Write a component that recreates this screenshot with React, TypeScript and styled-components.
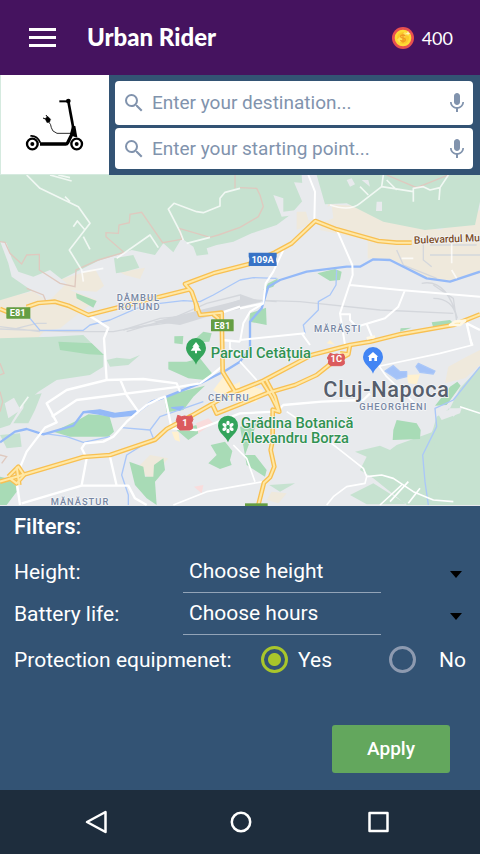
import React from 'react';
import styled, { createGlobalStyle } from 'styled-components';
import { MdMic, MdSearch } from 'react-icons/md';

const GlobalStyle = createGlobalStyle`
  *, *::before, *::after { box-sizing: border-box; }
  body { margin: 0; background: #335374; font-family: Roboto, sans-serif; }
  button, input, select { font: inherit; }
`;

const Page = styled.div`
  display: flex;
  flex-direction: column;
  min-height: 100vh;
  background: #335374;
  color: #fff;
`;

const Header = styled.header`
  display: flex;
  align-items: center;
  height: 75px;
  padding: 0 27px 0 28px;
  background: #45135f;
  font-family: Lato, sans-serif;
`;

const IconButton = styled.button`
  display: flex;
  padding: 0;
  border: 0;
  background: none;
  color: #fff;
  cursor: pointer;
`;

const Title = styled.h1`
  flex: 1;
  margin: 0 0 2px 30px;
  font-size: 24px;
  line-height: 32px;
  font-weight: 900;
`;

const Coins = styled.div`
  display: flex;
  align-items: center;
  gap: 8px;
  font-size: 18px;
`;

const SearchPanel = styled.section`
  display: flex;
  background: #335374;
`;

const Vehicle = styled.div`
  display: grid;
  place-items: center;
  width: 109px;
  height: 100px;
  background: #fff;
  border: solid #d5eadf;
  border-width: 0 0 1px 1px;
`;

const Fields = styled.div`
  flex: 1;
  display: flex;
  flex-direction: column;
  gap: 3px;
  padding: 6px 7px 6px 6px;
`;

const Field = styled.label`
  flex: 1;
  display: flex;
  align-items: center;
  gap: 6px;
  padding: 0 4px 0 7px;
  border-radius: 4px;
  background: #fff;
  color: #8193ad;
  &:first-child { flex: none; height: 44px; }
`;

const SearchInput = styled.input`
  flex: 1;
  min-width: 0;
  padding: 0;
  border: 0;
  outline: 0;
  background: none;
  color: #50617a;
  font-size: 19px;
  line-height: 24px;
  &::placeholder { color: #8193ad; opacity: 1; }
`;

const MapArt = styled.svg`
  display: block;
  width: 100%;
  height: auto;
  background: #e8eaed;
`;

const Filters = styled.form`
  flex: 1;
  display: flex;
  flex-direction: column;
  padding: 8px 14px 17px;
  font-size: 21px;
  line-height: 26px;
`;

const FiltersTitle = styled.h2`
  margin: 0 0 11px;
  font-size: 22px;
  line-height: 26px;
  font-weight: 500;
`;

const FilterRow = styled.div`
  display: flex;
  align-items: center;
  height: 42px;
`;

const FilterLabel = styled.label`
  width: 169px;
`;

const SelectBox = styled.div`
  position: relative;
  flex: 1;
  display: flex;
`;

const Select = styled.select`
  flex: 1;
  height: 42px;
  padding: 0 40px 2px 6px;
  border: 0;
  border-radius: 0;
  outline: 0;
  appearance: none;
  color: #fff;
  background: linear-gradient(#93a4b8, #93a4b8) left bottom / 70% 1px no-repeat;
`;

const Caret = styled.svg`
  position: absolute;
  right: 4px;
  top: 20px;
  pointer-events: none;
`;

const RadioRow = styled.fieldset`
  display: flex;
  align-items: center;
  margin: 0;
  padding: 11px 0 10px;
  border: 0;
`;

const RadioTitle = styled.span`
  flex: 1;
`;

const Choices = styled.div`
  display: flex;
  gap: 57px;
`;

const Choice = styled.label<{ $gap: number }>`
  display: flex;
  align-items: center;
  gap: ${(p) => p.$gap}px;
`;

const Radio = styled.input`
  appearance: none;
  width: 27px;
  height: 27px;
  margin: 0;
  border: 3px solid #8d9ab0;
  border-radius: 50%;
  &:checked {
    border-color: #a9c62b;
    background: radial-gradient(circle, #a9c62b 0 6px, transparent 7px);
  }
`;

const Apply = styled.button`
  align-self: flex-end;
  width: 118px;
  height: 48px;
  margin: auto 16px 0 0;
  border: 0;
  border-radius: 3px;
  background: #63a75d;
  color: #fff;
  font-size: 19px;
  font-weight: 500;
`;

const NavBar = styled.nav`
  display: flex;
  align-items: center;
  justify-content: space-between;
  height: 64px;
  padding: 0 90px 0 84px;
  background: #1e2d3d;
`;

const Scooter = () => (
  <svg width="70" height="70" viewBox="0 0 210 210" fill="none" stroke="#000" role="img" aria-label="Electric scooter">
    <circle cx="37" cy="162" r="16" strokeWidth="7" />
    <circle cx="37" cy="162" r="6" fill="#000" stroke="none" />
    <circle cx="170" cy="162" r="16" strokeWidth="7" />
    <circle cx="170" cy="162" r="6" fill="#000" stroke="none" />
    <path d="M31 138q20-2 30 20" strokeWidth="5" />
    <path d="M60 162h77q4 0 6-4l18-36" strokeWidth="10" />
    <path d="M118 34h28" strokeWidth="6" />
    <path d="M145 34l16 86" strokeWidth="8" />
    <circle cx="145" cy="33" r="7" fill="#000" stroke="none" />
    <path d="M156 108h10l6 34-10-2-12-8z" fill="#000" stroke="none" />
    <path d="M86 96q7 6 8 17t17 17h44" strokeWidth="2.5" />
    <path d="M75 86l8-7 9 9-3 8-8 2z" fill="#000" strokeWidth="1" />
    <path d="M76 87l-7-3M82 81l-4-6" strokeWidth="3" />
  </svg>
);

const Coin = () => (
  <svg width="22" height="22" viewBox="0 0 66 66" aria-hidden="true">
    <circle cx="33" cy="33" r="33" fill="#e8504f" />
    <circle cx="33" cy="33" r="25" fill="#fddb35" />
    <circle cx="33" cy="33" r="18" fill="#fcc92d" />
    <path d="M15 38L39 14l8 6-24 28z" fill="#ffe45c" />
    <path d="M40 27q-3-3-7-3-7 0-7 5 0 3 7 4t7 5q0 5-7 5-5 0-8-3M33 20v27" fill="none" stroke="#f09a22" strokeWidth="4" />
    <path d="M48 11l2 6 6 2-6 2-2 6-2-6-6-2 6-2z" fill="#fff4bd" />
  </svg>
);

const highways = [
  'M0 402L25 412M80 396L115 384L165 380L205 392L265 420L350 398L480 365L570 343',
  'M1235 203L1190 203L1135 198L1010 163L946 138L875 205L825 232L745 268L640 295L555 327L575 350L600 420L665 413L668 590L705 650',
  'M588 385L590 408M640 418L655 430L655 460',
  'M1440 418L1410 430L1360 450L1200 478L1110 500L1050 510L935 540L790 617L720 645L690 655L640 685L575 722L500 762L465 794L330 840L250 846L60 902L0 920',
  'M1050 510L1045 538L1020 535M1045 538L990 568L950 600L885 630L805 653L720 688L650 716L638 690',
  'M785 617L815 665L835 706M797 612L825 665L838 710L818 704L818 795L812 825L823 875L810 907L792 923L775 990',
  'M25 905L55 875L72 900L50 925L30 910M50 875L58 930',
];

const pin = 'M0 46C-5 28-30 18-30-4a30 30 0 0 1 60 0C30 18 5 28 0 46z';

const CityMap = () => (
  <MapArt viewBox="0 0 1440 993" preserveAspectRatio="xMidYMid slice" role="img" aria-label="Map of Cluj-Napoca">
    <g fill="#efe9dc">
      <path d="M0 370L90 352L175 315L285 282L312 332L290 350L210 345L290 375L240 412L180 460L130 470L100 505L35 508L0 500z" />
      <path d="M360 292L435 278L420 312L375 300z" />
      <path d="M985 88L1060 92L1150 135L1320 165L1440 105V295L1350 322L1275 308L1180 255L1103 250V195L960 165z" />
      <path d="M890 110L920 110L950 138L890 165z" />
      <path d="M0 495H150L115 508L0 503zM415 875L450 840L505 850L475 885L465 920L435 900z" />
      <path d="M1345 575L1400 545L1440 525V570L1395 610L1335 625zM815 950L860 955L835 985L800 975z" />
    </g>
    <g fill="#c6e2d0">
      <path d="M0 0H905L910 75L870 120L830 150L755 175L700 200L650 210L620 220L625 238L590 242L580 215L545 190L520 232L490 205L465 240L395 225L370 235L300 255L180 315L85 350L0 376z" />
      <path d="M342 250L400 240L418 278L375 290L348 295zM950 0H1440V80L1425 150L1275 165L1150 140L1070 100L1040 85L975 88z" />
      <path d="M0 490L155 485L250 480L310 540L310 575L270 600L170 615L115 650L60 700L30 750L0 760z" />
      <path d="M75 665L125 655L105 705L85 745L40 745L70 700zM0 780L60 775L65 815L20 820zM320 555L350 548L390 552L420 540L385 570L330 575z" />
      <path d="M1440 575L1380 640L1350 700L1310 725L1300 760L1268 840L1290 990H1440zM1345 700L1385 700L1360 725z" />
      <path d="M1065 830L1140 812L1170 825L1190 810L1300 770L1320 990H1220L1120 910L1080 885L1100 845zM1120 925L1050 960L1100 988H1220zM808 930L885 925L840 950z" />
    </g>
    <g fill="#a8dbb6">
      <path d="M228 355L290 378L280 398L230 370zM523 484L550 483L548 508L523 505zM588 490L610 470L635 475L628 500L595 502z" />
      <path d="M175 500L275 505L312 540L265 538L180 525zM505 560L560 560L600 550L640 600L615 615L565 610L505 583z" />
      <path d="M160 770L235 735L265 718L328 722L342 770L325 785L210 785zM493 670L530 653L615 632L580 665L550 705L500 712z" />
      <path d="M388 860L430 875L435 905L460 905L462 870L490 850L495 885L465 920L470 990L440 970L405 930zM0 905L45 915L50 950L20 990H0z" />
      <path d="M530 765L590 750L595 775L565 795zM632 810L675 800L697 828L690 855L695 870L660 882L625 865L650 840zM720 755L770 745L735 840L765 840L800 885L795 905L740 870z" />
      <path d="M952 295L1005 282L1025 290L1020 315L990 318zM805 325L835 310L820 335L790 345zM750 415L798 398L800 450L748 440zM1202 460L1235 458L1200 470zM1295 442L1350 435L1360 445L1300 458z" />
      <path d="M1180 765L1190 735L1250 745L1262 765L1260 792L1178 795zM1350 635L1372 620L1382 632L1340 690L1305 692z" />
    </g>
    <g fill="#fff1cf">
      <path d="M668 608L700 630L720 620V685L665 665L640 645zM720 645L760 635L790 645L770 680L720 690zM1220 600L1260 598L1250 628L1225 625zM515 770L535 770L540 800L525 795zM980 505L990 495L1005 510z" />
      <path d="M588 745L625 730L640 745L595 775zM582 935L610 930L605 955z" fill="#f9dcdc" />
    </g>
    <g fill="#e8eaed">
      <path d="M0 198L20 205L35 250L55 290L100 305L150 285L200 325L145 380L85 340L35 305L25 265z" />
      <path d="M162 22L200 25L230 80L240 105L275 90L280 130L240 145L205 135L195 100zM815 60L850 100L890 110L830 145zM100 60L130 70L130 110L170 105L165 120L125 125z" transform="translate(720 0)" />
      <path d="M1130 80H1146V108H1128zM1040 15L1055 10L1065 28L1050 35zM1085 15L1105 15L1110 35zM14 685L42 668L62 705L25 730zM1310 710L1385 700L1380 715L1325 735z" />
    </g>
    <g fill="none" stroke="#d4d7dc" strokeWidth="4">
      <path d="M0 462L200 470L340 470L600 420L720 400M0 455L120 470M50 460L110 445L140 445M380 470L530 425L620 385L720 360M750 375L900 380L1140 405L1360 415M720 372L830 380" />
      <path d="M370 465L480 430L600 420L720 375M390 460L530 440L620 415M1190 225L1210 270L1310 310M1270 190V255L1295 275M1290 210H1430M1290 240H1440M1300 330L1360 370L1370 440M1300 370Q1360 370 1370 430M1265 325Q1340 310 1372 430" />
      <path d="M460 440L720 375V395L540 450zM720 357L785 380L720 395z" fill="#d4d7dc" stroke="none" />
    </g>
    <g fill="none" stroke="#aac7f8" strokeWidth="4" strokeLinejoin="round">
      <path d="M40 398L90 430L120 466H250L270 450L330 435L410 400L480 385L550 377L600 380L640 360L720 315M720 315L760 308L830 310M1010 285L1008 330L990 360L955 380L955 405L910 450L915 475" />
      <path d="M130 775L200 785L250 802L330 785M365 758L450 765L480 725L610 680M450 765L460 790L380 840L365 900L385 960V990M1440 575L1360 675L1305 700L1310 755L1268 840L1275 920L1285 990" />
      <path d="M0 802L45 770L80 762L130 778L220 752L250 712L300 708L340 720L415 710L455 680L500 665L600 625L680 585L720 560L750 520V440L785 400L805 335L840 315L920 290L1040 275L1080 275L1120 253L1170 255L1280 310L1350 320L1440 290" stroke="#94b9f8" strokeWidth="7" />
      <path d="M250 710L300 705L345 715L410 707L405 720L340 726L300 718zM515 698L550 695L540 705z" fill="#94b9f8" stroke="#94b9f8" />
      <path d="M1155 588L1180 572L1200 590L1220 590V605L1190 612zM1248 575L1255 565L1305 588L1300 597L1260 592z" fill="#a3c2f8" />
    </g>
    <g fill="none" stroke="#dfc9bf" strokeWidth="4">
      <path d="M0 200L15 202L30 235L65 267L80 240L118 238L118 285L180 325L225 335L228 285L295 255L372 232L318 185V173L355 175L357 150L388 143L390 118L425 112L450 148L488 203L545 193L538 160L630 187L655 180L720 157L775 125L790 95L780 60L770 40L720 38M705 0V40M80 340L130 360L140 385M1160 0L1250 38L1345 0M0 565L12 595L0 600M0 650L8 680L0 710M0 840L20 845L5 865" />
    </g>
    <g fill="none" stroke="#fff" strokeWidth="5" strokeLinejoin="round">
      <g strokeOpacity="0.75">
        <path d="M80 0L120 40L235 95L270 145L208 225L245 285L250 320M220 155L232 138L255 165M250 185L270 223M195 65L210 80M245 292L310 280M350 250L450 180L475 218M720 40L675 52L660 70V93L610 113L590 110L522 85L505 102L540 170L550 195M560 205L630 187M150 0L215 18M175 0L210 8" />
        <path d="M990 90Q1050 110 1080 85L1145 35L1150 0M1145 35L1240 50V80M1240 50V40L1270 35L1290 45L1320 38L1345 0M1320 38L1317 75M1080 35L1105 60M1160 15L1190 45M1240 250H1205M1355 205V265M1355 285L1370 310M60 700L85 665" />
      </g>
      <path d="M925 0L945 50L943 138M1010 163L1057 270L1058 300L1020 415L1035 510M1050 330L1200 345L1440 365M1215 345L1195 395L1155 430L1070 455L1050 435V418H1022M1100 447L1120 495M915 475L720 495M905 475L930 510M850 225L820 290L797 325L790 385L750 410L730 445L720 500" strokeWidth="6" />
      <path d="M265 420L325 458L312 490L320 615M720 395L665 413M665 495L720 500M665 495V560M790 385L720 400M1400 445L1415 510M1400 445L1440 465" strokeWidth="7" />
      <path d="M60 990L50 920L55 890L80 830L135 758L170 742L140 685L200 645L320 615L430 612L530 625L540 650M155 725L230 675L540 635L600 625L635 600L665 575M360 612L380 660L415 710L380 740L340 785L310 800L255 805L245 820L260 850L245 930M65 985L245 932L385 932L405 970L440 990M330 845L350 932M415 710L440 690L480 670L495 665L515 760L590 765L720 715L830 710L850 690L965 680L1090 675L1110 655" strokeWidth="7" />
      <path d="M520 990L620 950L720 932L790 920M860 710L950 770L1090 880L1100 905L1095 925L1040 935L1000 965L980 990M1100 905L1145 900L1180 910L1240 950L1300 975L1360 980M700 810L740 850L765 920M1135 570L1160 605L1260 700M1140 573L1320 535L1418 510L1410 490M1380 695L1440 715M720 560L770 615M690 500V520L720 545M1225 920L1170 980M1205 930L1140 990M1260 940L1225 985" />
    </g>
    <g fill="none" strokeLinejoin="round">
      {highways.map((d) => <path key={d} d={d} stroke="#f8c052" strokeWidth="14" />)}
      {highways.map((d) => <path key={d} d={d} stroke="#ffe8a6" strokeWidth="6" />)}
      <path d="M1365 440L1395 437L1380 450L1350 450zM1100 490L1125 485" stroke="#fff8e4" strokeWidth="8" />
    </g>

    <g>
      <rect x="19" y="397" width="72" height="34" rx="2" fill="#659e43" />
      <rect x="633" y="433" width="68" height="36" rx="2" fill="#659e43" />
      <rect x="735" y="985" width="68" height="8" fill="#659e43" />
      <path d="M746 233H830V245q-4 9 0 18v10H746V263q4-9 0-18z" fill="#3873c6" />
      <path d="M533 721l12 4q10-4 16 0l14-3 4 11-4 10q4 10 2 18l-8 4H540l-8-7 1-12-4-9zM990 535l12 4q10-4 16 0l12-2 4 9-2 10q3 8 0 12l-8 4H992l-7-6 1-10-4-7z" fill="#db5b5e" stroke="#db5b5e" strokeWidth="3" />
    </g>
    <g fill="#fff" fontFamily="Roboto, sans-serif" fontSize="28" fontWeight="700" textAnchor="middle">
      <text x="53" y="424">E81</text>
      <text x="667" y="461">E81</text>
      <text x="788" y="263">109A</text>
      <text x="555" y="753">1</text>
      <text x="1009" y="562">1C</text>
    </g>

    <g transform="translate(588 523)">
      <path d={pin} fill="#34a45b" />
      <path d="M0-22l11 14H7l9 12H3v8h-6V4h-13l9-12h-4z" fill="#fff" />
    </g>
    <g transform="translate(684 756)">
      <path d={pin} fill="#34a45b" />
      <g fill="#fff">
        {[0, 60, 120, 180, 240, 300].map((a) => (
          <ellipse key={a} cx="0" cy="-12" rx="5" ry="7" transform={`rotate(${a} 0 0)`} />
        ))}
      </g>
    </g>
    <g transform="translate(1119 550)">
      <path d={pin} fill="#4285f4" />
      <path d="M0-19l16 14h-4V8H4V-1h-8v9h-8V-5h-4z" fill="#fff" />
    </g>

    <g fontFamily="Roboto, sans-serif" fontWeight="500" stroke="#f4f6f8" strokeWidth="5" paintOrder="stroke" strokeLinejoin="round">
      <g fill="#7786a3" fontSize="28" letterSpacing="3">
        <text x="350" y="378">DÂMBUL</text>
        <text x="354" y="405">ROTUND</text>
        <text x="942" y="472">MĂRĂȘTI</text>
        <text x="624" y="678">CENTRU</text>
        <text x="1078" y="706">GHEORGHENI</text>
        <text x="152" y="989">MĂNĂȘTUR</text>
      </g>
      <g fill="#319252" fontSize="44">
        <text x="632" y="548">Parcul Cetățuia</text>
        <text x="723" y="758">Grădina Botanică</text>
        <text x="723" y="804">Alexandru Borza</text>
      </g>
      <text x="1242" y="206" fill="#7d4d27" fontSize="31" transform="rotate(-2 1242 206)">Bulevardul Mu</text>
      <text x="970" y="665" fill="#565e6c" fontSize="65" letterSpacing="2">Cluj-Napoca</text>
    </g>
  </MapArt>
);

const PickerRow = ({ id, label, placeholder, options }: { id: string; label: string; placeholder: string; options: string[] }) => (
  <FilterRow>
    <FilterLabel htmlFor={id}>{label}</FilterLabel>
    <SelectBox>
      <Select id={id} defaultValue="">
        <option value="">{placeholder}</option>
        {options.map((o) => <option key={o}>{o}</option>)}
      </Select>
      <Caret width="12" height="7" viewBox="0 0 12 7" aria-hidden="true"><path d="M0 0h12L6 7z" /></Caret>
    </SelectBox>
  </FilterRow>
);

export default function App() {
  return (
    <Page>
      <GlobalStyle />
      <Header>
        <IconButton type="button" aria-label="Menu">
          <svg width="29" height="19" viewBox="0 0 29 19" aria-hidden="true">
            <path d="M1 1.5h27M1 9.5h27M1 17.5h27" stroke="#fff" strokeWidth="3" />
          </svg>
        </IconButton>
        <Title>Urban Rider</Title>
        <Coins><Coin />400</Coins>
      </Header>
      <SearchPanel>
        <Vehicle><Scooter /></Vehicle>
        <Fields>
          {['Enter your destination...', 'Enter your starting point...'].map((text) => (
            <Field key={text}>
              <MdSearch size={24} aria-hidden="true" />
              <SearchInput type="text" aria-label={text} placeholder={text} />
              <MdMic size={24} aria-hidden="true" />
            </Field>
          ))}
        </Fields>
      </SearchPanel>
      <CityMap />
      <Filters onSubmit={(e) => e.preventDefault()}>
        <FiltersTitle>Filters:</FiltersTitle>
        <PickerRow id="height" label="Height:" placeholder="Choose height" options={['Low', 'Medium', 'High']} />
        <PickerRow id="battery" label="Battery life:" placeholder="Choose hours" options={['1', '2', '3']} />
        <RadioRow aria-labelledby="protection-title">
          <RadioTitle id="protection-title">Protection equipmenet:</RadioTitle>
          <Choices>
            <Choice $gap={10}><Radio type="radio" name="protection" defaultChecked />Yes</Choice>
            <Choice $gap={23}><Radio type="radio" name="protection" />No</Choice>
          </Choices>
        </RadioRow>
        <Apply type="submit">Apply</Apply>
      </Filters>
      <NavBar aria-label="System">
        <IconButton type="button" aria-label="Back">
          <svg width="32" height="24" viewBox="0 0 32 24" fill="none" stroke="currentColor" strokeWidth="2.5" strokeLinejoin="round"><path d="M21.5 2v20L3 12z" /></svg>
        </IconButton>
        <IconButton type="button" aria-label="Home">
          <svg width="24" height="24" viewBox="0 0 24 24" fill="none" stroke="currentColor" strokeWidth="2.5"><circle cx="12" cy="12" r="9.2" /></svg>
        </IconButton>
        <IconButton type="button" aria-label="Recent apps">
          <svg width="24" height="24" viewBox="0 0 24 24" fill="none" stroke="currentColor" strokeWidth="2.5" strokeLinejoin="round"><path d="M3.5 3h18v18h-18z" /></svg>
        </IconButton>
      </NavBar>
    </Page>
  );
}
